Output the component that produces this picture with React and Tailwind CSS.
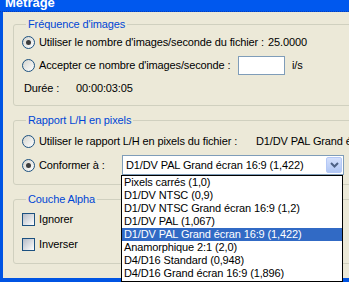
import React from "react";

function Radio({ checked }) {
  return (
    <span className="w-[13px] h-[13px] rounded-full border border-[#1C5180] bg-linear-to-br from-[#D4D4CE] to-white flex items-center justify-center shrink-0">
      {checked && <span className="w-[5px] h-[5px] rounded-full bg-[#3C3C3C]" />}
    </span>
  );
}

function Check() {
  return (
    <span className="w-[13px] h-[13px] border border-[#1C5180] bg-linear-to-br from-[#B6BCC8] via-[#DADDE2] to-white shrink-0" />
  );
}

function Group({ title, children, className }) {
  return (
    <fieldset className={"w-[360px] border border-[#D0D0BF] rounded-[3px] pl-[8px] " + className}>
      <legend className="ml-[4px] px-[2px] text-[#0046D5] leading-[13px]">{title}</legend>
      {children}
    </fieldset>
  );
}

const items = [
  "Pixels carrés (1,0)",
  "D1/DV NTSC (0,9)",
  "D1/DV NTSC Grand écran 16:9 (1,2)",
  "D1/DV PAL (1,067)",
  "D1/DV PAL Grand écran 16:9 (1,422)",
  "Anamorphique 2:1 (2,0)",
  "D4/D16 Standard (0,948)",
  "D4/D16 Grand écran 16:9 (1,896)",
];

export default function App() {
  return (
    <div className="relative w-[349px] h-[282px] overflow-hidden bg-[#0054E3] font-['Liberation_Sans',Arial,sans-serif] text-[11px] leading-[13px] tracking-[-0.12px] text-black">
      <div className="h-[12px] overflow-hidden border-b border-dotted border-[#0A3FB8] bg-[#0058EE]">
        <div className="mt-[-4px] pl-[5px] text-white font-bold text-[13px] leading-[13px] tracking-normal">Métrage</div>
      </div>
      <div className="ml-[3px] h-[266px] bg-[#ECE9D8] pl-[10px] pt-[6px]">
        <Group title="Fréquence d'images" className="pb-[5px]">
          <div className="h-[23px] flex items-center">
            <Radio checked />
            <span className="ml-[4px] w-[229px] whitespace-nowrap">Utiliser le nombre d'images/seconde du fichier :</span>
            <span>25.0000</span>
          </div>
          <div className="h-[23px] flex items-center">
            <Radio />
            <span className="ml-[4px] w-[199px] whitespace-nowrap">Accepter ce nombre d'images/seconde :</span>
            <span className="w-[47px] h-[19px] border border-[#7F9DB9] bg-white" />
            <span className="ml-[7px]">i/s</span>
          </div>
          <div className="h-[23px] flex items-center">
            <span className="ml-[2px] w-[52px]">Durée :</span>
            <span>00:00:03:05</span>
          </div>
        </Group>
        <Group title="Rapport L/H en pixels" className="mt-[8px] pt-[2px] pb-[7px]">
          <div className="h-[24px] flex items-center">
            <Radio />
            <span className="ml-[4px] w-[217px] whitespace-nowrap">Utiliser le rapport L/H en pixels du fichier :</span>
            <span className="whitespace-nowrap">D1/DV PAL Grand écran 16:9 (1,422)</span>
          </div>
          <div className="h-[24px] flex items-center">
            <Radio checked />
            <span className="ml-[4px] w-[83px] whitespace-nowrap">Conformer à :</span>
            <div className="w-[222px] h-[20px] border border-[#7F9DB9] bg-white flex items-center pl-[3px] pr-[1px]">
              <span className="flex-1 whitespace-nowrap">D1/DV PAL Grand écran 16:9 (1,422)</span>
              <span className="w-[16px] h-[16px] rounded-[2px] border border-[#B4C8F6] bg-linear-to-b from-[#D4E0FC] to-[#B0C6F4] flex items-center justify-center">
                <svg width="9" height="6" viewBox="0 0 9 6">
                  <path d="M1 1 L4.5 4.5 L8 1" fill="none" stroke="#4D6185" strokeWidth="2" />
                </svg>
              </span>
            </div>
          </div>
        </Group>
        <Group title="Couche Alpha" className="mt-[8px] pt-[1px] pb-[6px]">
          <div className="h-[25px] flex items-center">
            <Check />
            <span className="ml-[4px]">Ignorer</span>
          </div>
          <div className="h-[25px] flex items-center">
            <Check />
            <span className="ml-[4px]">Inverser</span>
          </div>
        </Group>
      </div>
      <div className="absolute left-[121px] top-[175px] w-[222px] h-[107px] border border-black bg-white">
        {items.map((t, i) => (
          <div
            key={t}
            className={
              "h-[13px] pl-[2px] whitespace-nowrap leading-[13px] " +
              (i === 4 ? "bg-[#316AC5] text-white" : "")
            }
          >
            {t}
          </div>
        ))}
      </div>
    </div>
  );
}
